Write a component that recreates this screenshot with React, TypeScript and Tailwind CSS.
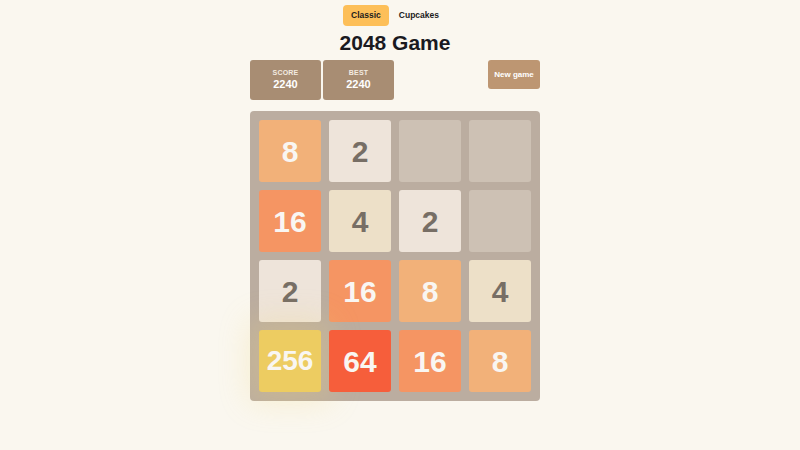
import { useState } from 'react'

type Cell = number | null

const BOARD: Cell[][] = [
  [8, 2, null, null],
  [16, 4, 2, null],
  [2, 16, 8, 4],
  [256, 64, 16, 8],
]

const tileStyle: Record<number, string> = {
  2: 'bg-[#eee4da] text-[#776e65]',
  4: 'bg-[#ede0c8] text-[#776e65]',
  8: 'bg-[#f2b179] text-[#f9f6f2]',
  16: 'bg-[#f59563] text-[#f9f6f2]',
  32: 'bg-[#f67c5f] text-[#f9f6f2]',
  64: 'bg-[#f65e3b] text-[#f9f6f2]',
  128: 'bg-[#edcf72] text-[#f9f6f2]',
  256: 'bg-[#edcc61] text-[#f9f6f2] shadow-[0_0_30px_10px_rgba(243,215,116,0.25)]',
}

function Tile({ value }: { value: Cell }) {
  if (value === null) return <div className="h-[62px] w-[62px] rounded-[3px] bg-[#cdc1b4]" />
  const size = value >= 100 ? 'text-[28px]' : 'text-[30px]'
  return (
    <div className={`flex h-[62px] w-[62px] items-center justify-center rounded-[3px] font-bold ${size} ${tileStyle[value]}`}>
      {value}
    </div>
  )
}

function ScoreBox({ label, value }: { label: string; value: number }) {
  return (
    <div className="flex h-[40px] w-[71px] flex-col items-center justify-center rounded-[3px] bg-[#a88d73] text-white">
      <div className="text-[7px] font-semibold uppercase leading-[8px] tracking-wide text-[#f3ebe1]">{label}</div>
      <div className="text-[11px] font-bold leading-[14px]">{value}</div>
    </div>
  )
}

export default function App() {
  const [mode, setMode] = useState<'classic' | 'cupcakes'>('classic')

  return (
    <div className="flex min-h-[450px] flex-col items-center bg-[#faf7ef] pr-[10px] font-['Liberation_Sans',Arial,sans-serif] text-[#1c1c1c]">
      <div className="mt-[5px] flex items-center gap-[2px]">
        <button
          onClick={() => setMode('classic')}
          className={`h-[21px] rounded-[4px] px-[8px] text-[8.5px] font-bold ${mode === 'classic' ? 'bg-[#fdbf58]' : ''}`}
        >
          Classic
        </button>
        <button
          onClick={() => setMode('cupcakes')}
          className={`h-[21px] rounded-[4px] px-[8px] text-[8.5px] font-bold ${mode === 'cupcakes' ? 'bg-[#fdbf58]' : ''}`}
        >
          Cupcakes
        </button>
      </div>

      <h1 className="mt-[4px] text-[21px] font-bold leading-[26px] text-[#1a1a1f]">2048 Game</h1>

      <div className="mt-[4px] flex w-[290px] items-start">
        <div className="flex gap-[2px]">
          <ScoreBox label="Score" value={2240} />
          <ScoreBox label="Best" value={2240} />
        </div>
        <button className="ml-auto h-[29px] w-[52px] rounded-[3px] bg-[#bd9672] text-[8px] font-bold text-white">
          New game
        </button>
      </div>

      <div className="mt-[11px] grid w-[290px] grid-cols-4 gap-[8px] rounded-[4px] bg-[#bbada0] p-[9px]">
        {BOARD.flat().map((v, i) => (
          <Tile key={i} value={v} />
        ))}
      </div>
    </div>
  )
}
